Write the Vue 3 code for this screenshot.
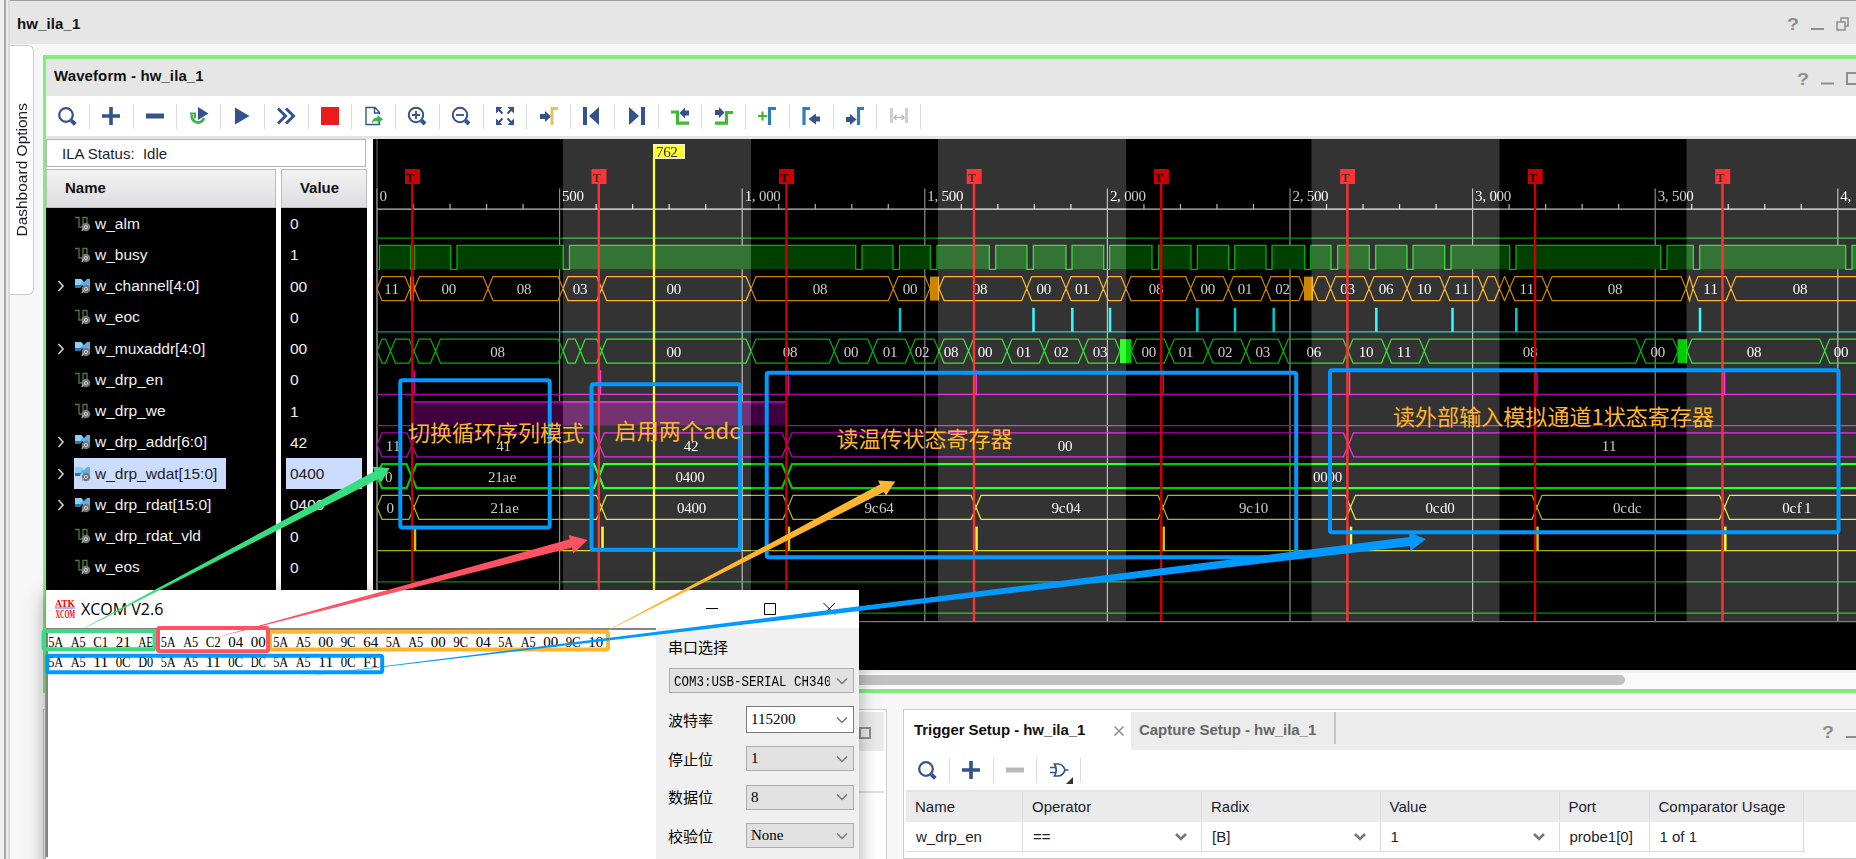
<script setup>
const N = '#34528c'
const icons = {
  search: `<circle cx="11" cy="11" r="6.8" fill="none" stroke="${N}" stroke-width="2.2"/><path d="M16.3 16.3l4 4" stroke="${N}" stroke-width="4"/>`,
  plus: `<path d="M12 3v18M3 12h18" stroke="${N}" stroke-width="3.6"/>`,
  minus: `<path d="M3 12h18" stroke="${N}" stroke-width="5"/>`,
  minusOff: `<path d="M3 12h18" stroke="#b9b9b9" stroke-width="5"/>`,
  restart: `<path d="M5 10.5a6.2 6.2 0 1 0 12 3.5" fill="none" stroke="#3db54a" stroke-width="2.8"/><path d="M3 9.500h5v5" fill="none" stroke="#3db54a" stroke-width="2"/><path d="M11 3l10.500 6.500L11 16z" fill="${N}"/>`,
  play: `<path d="M5 3.500l14.500 8.500L5 20.500z" fill="${N}"/>`,
  run: `<path d="M4 4.500l7.500 7.500L4 19.500M12 4.500l7.500 7.500-7.500 7.500" fill="none" stroke="${N}" stroke-width="3"/>`,
  stop: `<path d="M3 3h18v18H3z" fill="#ed1c1c"/>`,
  export: `<path d="M17.500 17v3.500H4V3.500h9l4.500 5v2M12.500 3.500v5.500h5" fill="none" stroke="${N}" stroke-width="1.400"/><path d="M10 19.500c0-4 2-6 5.500-6v-2.500l5.500 4.300-5.500 4.300v-2.600c-2.500 0-4.500.5-5.500 2.500z" fill="#3db54a"/>`,
  zoomIn: `<circle cx="11" cy="11" r="7.200" fill="none" stroke="${N}" stroke-width="2"/><path d="M11 7v8M7 11h8" stroke="${N}" stroke-width="1.800"/><path d="M16.500 16.500l3.500 3.500" stroke="${N}" stroke-width="4"/>`,
  zoomOut: `<circle cx="11" cy="11" r="7.200" fill="none" stroke="${N}" stroke-width="2"/><path d="M7 11h8" stroke="${N}" stroke-width="1.800"/><path d="M16.500 16.500l3.500 3.500" stroke="${N}" stroke-width="4"/>`,
  fit: `<path d="M3 3h6.500L3 9.500zM21 3v6.500L14.500 3zM3 21v-6.500L9.500 21zM21 21h-6.500l6.500-6.500z" fill="${N}"/><path d="M5 5l4.500 4.500M19 5l-4.500 4.500M5 19l4.500-4.500M19 19l-4.500-4.500" stroke="${N}" stroke-width="2"/>`,
  toCursor: `<path d="M3 10h5V7l6 5.500-6 5.500v-3H3z" fill="${N}"/><path d="M15 21V4.500h6" fill="none" stroke="#e0c463" stroke-width="3"/>`,
  first: `<path d="M3 3h4v18H3zM19 3v18l-10-9z" fill="${N}"/>`,
  last: `<path d="M17 3h4v18h-4zM5 3v18l10-9z" fill="${N}"/>`,
  prevEdge: `<path d="M3 8h6.500v11.200H21" fill="none" stroke="#3fb934" stroke-width="3.200"/><path d="M21 6.500h-4v-3L11.500 9l5.500 5.500v-3h4z" fill="${N}"/>`,
  nextEdge: `<path d="M3 19.200h11.500V8.500H21" fill="none" stroke="#3fb934" stroke-width="3.200"/><path d="M3 6h4V3l5.500 5.500L7 14v-3H3z" fill="${N}"/>`,
  addMark: `<path d="M3 12h9M7.500 7.500v9" stroke="#3fb934" stroke-width="2.200"/><path d="M14.500 21V4.500H21" fill="none" stroke="#2f7fb5" stroke-width="3.200"/>`,
  prevMark: `<path d="M5 21V4.500h6" fill="none" stroke="#2f7fb5" stroke-width="3.200"/><path d="M21 12.500h-4v-3L9.500 15l7.500 5.500v-3h4z" fill="${N}"/>`,
  nextMark: `<path d="M15.500 21V4.500H21" fill="none" stroke="#2f7fb5" stroke-width="3.200"/><path d="M3 13h4v-3l6.500 5.500L7 21v-3H3z" fill="${N}"/>`,
  swap: `<path d="M4.500 4v15M19.500 4v15" stroke="#cfcfcf" stroke-width="3.200"/><path d="M7 13.500h10M9.500 11l-2.500 2.500 2.500 2.500M14.500 11l2.500 2.500-2.500 2.500" fill="none" stroke="#b9b9b9" stroke-width="1.300"/>`,
  gate: `<path d="M7.500 6h3.500c4 0 6 3 7 6-1 3-3 6-7 6H7.500c2-3.500 2-8.500 0-12zM3 9.500h5.500M3 14.500h5.500M18 12h3.500" fill="none" stroke="${N}" stroke-width="1.700"/><path d="M26 19v7h-7z" fill="#333"/>`,
}
const tools = ['search', 'plus', 'minus', 'restart', 'play', 'run', 'stop', 'export', 'zoomIn', 'zoomOut', 'fit', 'toCursor', 'first', 'last', 'prevEdge', 'nextEdge', 'addMark', 'prevMark', 'nextMark', 'swap']
const trigTools = ['search', 'plus', 'minusOff', 'gate']

const signals = [
  ['w_alm', '0', 0], ['w_busy', '1', 0], ['w_channel[4:0]', '00', 1], ['w_eoc', '0', 0],
  ['w_muxaddr[4:0]', '00', 1], ['w_drp_en', '0', 0], ['w_drp_we', '1', 0], ['w_drp_addr[6:0]', '42', 1],
  ['w_drp_wdat[15:0]', '0400', 1, true], ['w_drp_rdat[15:0]', '0400', 1], ['w_drp_rdat_vld', '0', 0], ['w_eos', '0', 0],
]

const END = 1870
const low = (i) => 238.1 + 31.25 * i
const high = (i) => low(i) - 24

/* x of each [fall, rise] dip of the busy signal */
const dips = [[410.7, 414.3], [450.7, 457], [563, 569.5], [855.7, 862], [893, 899.5], [930.3, 937], [989.3, 995.7], [1027, 1033.3], [1066, 1072], [1103.7, 1109.7], [1152, 1158.7], [1191, 1197.3], [1228.7, 1234.7], [1266, 1272], [1304.7, 1310.7], [1331, 1337.7], [1369.3, 1375.7], [1407, 1413], [1444.7, 1451], [1509.7, 1516], [1660.7, 1667], [1693.3, 1699.7], [1845.7, 1852]]
const busyD = (() => {
  const h = high(1), l = low(1)
  let d = `M377 ${l}H379.500V${h}`
  dips.forEach(([f, r]) => { d += `H${f}V${l}H${r}V${h}` })
  return d + `H${END}`
})()
const busyFill = busyD + `V${low(1)}H379.5Z`

const hex = (i, xs) => {
  const h = high(i), l = low(i), m = (h + l) / 2
  let d = ''
  for (let k = 0; k < xs.length - 1; k++) {
    const a = xs[k], b = xs[k + 1]
    const s = Math.min(5, (b - a) / 2)
    d += `M${a} ${m}L${a + s} ${h}H${b - s}L${b} ${m}L${b - s} ${l}H${a + s}Z`
  }
  return d
}
/* fixed-pitch glyph positions: every character gets its own x */
const cells = (t, x, pitch = 7.15) => [...t].map((c, k) => (x + k * pitch).toFixed(2)).join(' ')

const buses = [
  { i: 2, c: '#c98300', w: 1.2, groups: [[377, 410, 414.5, 488, 563, 601.7, 751, 893.3, 930], [939, 1026.7, 1066, 1103.3, 1126, 1190.7, 1228.3, 1266, 1304], [1313, 1330.5, 1369, 1407, 1444.7, 1483, 1499.5, 1509.7, 1547, 1686, 1693, 1731, END]],
    t: [['11', 391.5], ['00', 448.8], ['08', 524], ['03', 580], ['00', 673.7], ['08', 820], ['00', 910], ['08', 980], ['00', 1043.7], ['01', 1082.3], ['08', 1156], ['00', 1207.7], ['01', 1245], ['02', 1282.5], ['03', 1347.5], ['06', 1386], ['10', 1424], ['11', 1461.5], ['11', 1526.7], ['08', 1615], ['11', 1710.5], ['08', 1800]] },
  { i: 4, c: '#00b400', w: 1.2, groups: [[377, 390.5, 414, 435.5, 563, 580.3, 601.7, 751, 834.3, 872.7, 910.3, 939, 968.5, 1007, 1044.3, 1083.3, 1120], [1131.5, 1169.3, 1208, 1245.7, 1283.3, 1348, 1386.5, 1424.3, 1640.7, 1678], [1687, 1824.7, END]],
    t: [['08', 497.5], ['00', 673.7], ['08', 790], ['00', 851], ['01', 890], ['02', 922], ['08', 951], ['00', 985], ['01', 1023.7], ['02', 1061.3], ['03', 1100], ['00', 1148.7], ['01', 1186], ['02', 1225], ['03', 1262.7], ['06', 1313.7], ['10', 1366], ['11', 1404], ['08', 1530], ['00', 1657.7], ['08', 1754], ['00', 1841]] },
  { i: 7, c: '#b400b4', w: 1.3, groups: [[377, 412, 599.3, 787, 1348.5, END]], t: [['11', 393], ['41', 503.5], ['42', 691], ['00', 1065], ['11', 1609]] },
  { i: 8, c: '#00cc00', w: 2.2, groups: [[377, 411.5, 599, 787, END]], t: [['0', 388.7], ['21ae', 502.5], ['0400', 690], ['0000', 1327.5]] },
  { i: 9, c: '#b8b800', w: 1.2, groups: [[377, 414, 601.5, 788, 976, 1163, 1350.5, 1537, 1724.5, END]], t: [['0', 390], ['21ae', 505], ['0400', 691.5], ['9c64', 879], ['9c04', 1066], ['9c10', 1253.5], ['0cd0', 1440], ['0cdc', 1627.5], ['0cf1', 1796.7]] },
]
const blocks = [[930, 939, 2, '#cc8500'], [1304, 1313, 2, '#cc8500'], [1120, 1131.5, 4, '#00cc00'], [1677.5, 1687, 4, '#00cc00'], [410, 414, 2, '#cc8500']]
const eoc = [900, 1033.5, 1072.3, 1110, 1197.3, 1235, 1273.7, 1376.3, 1452.5, 1516.3, 1700]
const triggers = [412.3, 598.8, 786.4, 974, 1161.2, 1347.4, 1535, 1722.5]
const enPulses = [414.4, 600.6, 788.4, 976.2, 1163.2, 1349.6, 1537, 1724.6]
const vldPulses = [415, 602.5, 789, 976.5, 1163.7, 1351, 1537.5, 1725.3]
const bands = [[563, 751], [938, 1126], [1311.5, 1499.5], [1686.5, 1870]]
const majors = ['0', '500', '1,000', '1,500', '2,000', '2,500', '3,000', '3,500', '4,'].map((t, k) => ({ t, x: 377 + 182.6 * k }))
const minors = []
for (let k = 0; k < 41; k++) if (k % 5) minors.push(377 + 36.52 * k)

const bytes1 = '5A A5 C1 21 AE 5A A5 C2 04 00 5A A5 00 9C 64 5A A5 00 9C 04 5A A5 00 9C 10'.split(' ')
const bytes2 = '5A A5 11 0C D0 5A A5 11 0C DC 5A A5 11 0C F1'.split(' ')
const fields = [['波特率', '115200', true], ['停止位', '1'], ['数据位', '8'], ['校验位', 'None']]
</script>

<template>
  <div class="screen">
    <div class="edge"></div>
    <div class="main">
      <header class="top-head">
        <span class="bold">hw_ila_1</span>
        <svg class="winctl" width="72" height="24" viewBox="0 0 72 24">
          <text x="3" y="19" class="q" textLength="12" lengthAdjust="spacingAndGlyphs">?</text>
          <path d="M27 18h13" stroke="#8e8e8e" stroke-width="2" />
          <path d="M53 11h8v8h-8zM57 11V7h7v8h-3" fill="none" stroke="#8e8e8e" stroke-width="1.500" />
        </svg>
      </header>
      <div class="work">
        <aside class="side"><span>Dashboard Options</span></aside>
        <div class="docks">
          <section class="wave-panel">
            <header class="wave-head">
              <span class="bold">Waveform - hw_ila_1</span>
              <svg class="winctl mid" width="62" height="24" viewBox="0 0 62 24">
                <text x="3" y="17.500" class="q" textLength="12" lengthAdjust="spacingAndGlyphs">?</text>
                <path d="M27 16.500h13" stroke="#8e8e8e" stroke-width="2" />
                <path d="M53 6h12v11h-12z" fill="none" stroke="#8e8e8e" stroke-width="2" />
              </svg>
            </header>
            <div class="toolbar">
              <div v-for="t in tools" :key="t" class="tool"><svg width="24" height="24" viewBox="0 0 24 24" v-html="icons[t]"></svg></div>
            </div>
            <div class="wave-body">
              <div class="left">
                <div class="status">ILA Status:&nbsp; Idle</div>
                <div class="cols">
                  <div class="names">
                    <div class="colhead">Name</div>
                    <div v-for="s in signals" :key="s[0]" class="sig">
                      <svg class="exp" width="10" height="14" viewBox="0 0 10 14"><path v-if="s[2]" d="M2.500 2l4.500 5-4.500 5" fill="none" stroke="#c8c8c8" stroke-width="1.700" /></svg>
                      <span class="siglabel" :class="{ sel: s[3] }">
                        <svg width="16" height="16" viewBox="0 0 16 16">
                          <template v-if="s[2]">
                            <path d="M0 1h6l3 3 3-3h3v8H9L7 7l-2 3H0z" fill="#5fb0e6" /><path d="M0 1h6l2 2-3 4H0z" fill="#8ed0f5" /><path d="M0 7h6l-1 3H0z" fill="#2874b4" />
                          </template>
                          <path v-else d="M0 1.500h4v9.500h4V1.500h4v6" fill="none" stroke="#4d7a3c" stroke-width="1.300" />
                          <circle cx="11" cy="11" r="4.300" fill="#777" /><circle cx="11" cy="11" r="1.600" fill="none" stroke="#d0d0d0" /><path d="M7 15l1.500-3" stroke="#aaa" stroke-width="1.500" />
                        </svg>
                        <span>{{ s[0] }}</span>
                      </span>
                    </div>
                  </div>
                  <div class="values">
                    <div class="colhead val">Value</div>
                    <div v-for="s in signals" :key="s[0]" class="sigval"><span :class="{ sel: s[3] }">{{ s[1] }}</span></div>
                  </div>
                </div>
              </div>
              <svg class="wave" width="1483" height="531" viewBox="373 139 1483 531">
                <rect x="373" y="139" width="1483" height="531" fill="#000" />
                <path d="M377 139V621.500" stroke="#555" stroke-width="1.300" />
                <path d="M377 209.200H1856" stroke="#c0c0c0" stroke-width="1.300" />
                <g v-for="m in majors" :key="m.t">
                  <path :d="`M${m.x} 188.500V621.500`" stroke="#8c8c8c" stroke-width="1.200" />
                  <text :x="cells(m.t, m.x + 2.5)" y="201.200" class="num">{{ m.t }}</text>
                </g>
                <path v-for="x in minors" :key="x" :d="`M${x} 204V209`" stroke="#b4b4b4" stroke-width="1.200" />
                <path :d="`M377 ${low(0)}H1856`" stroke="#00a000" stroke-width="1.300" />
                <path :d="busyFill" fill="#004000" />
                <path :d="busyD" fill="none" stroke="#00b000" stroke-width="1.300" />
                <path :d="`M377 ${low(3)}H1856`" stroke="#009696" stroke-width="1.300" />
                <path v-for="x in eoc" :key="x" :d="`M${x} ${high(3)}V${low(3)}`" stroke="#00cccc" stroke-width="2.500" />
                <path :d="`M377 ${low(5)}H1856`" stroke="#b000b0" stroke-width="1.200" />
                <path v-for="x in enPulses" :key="x" :d="`M${x} ${high(5)}V${low(5)}`" stroke="#cc00cc" stroke-width="1.400" />
                <path :d="`M412 ${high(6)}H787V${low(6)}H412Z`" fill="#400040" />
                <path :d="`M412 ${high(6) + 0.5}H787`" stroke="#a000a0" stroke-width="2" />
                <path :d="`M377 ${low(6)}H412M787 ${low(6)}H1856`" stroke="#b000b0" stroke-width="1.200" />
                <path :d="`M377 ${low(10)}H1856`" stroke="#a8a800" stroke-width="1.200" />
                <path v-for="x in vldPulses" :key="x" :d="`M${x} ${high(10)}V${low(10)}`" stroke="#cccc00" stroke-width="2.500" />
                <path :d="`M377 ${low(11)}H1856M377 ${low(12)}H1856`" stroke="#009400" stroke-width="1.300" />
                <path d="M377 621.700H1856" stroke="#808080" stroke-width="1.300" />
                <rect v-for="b in blocks" :key="b[0]" :x="b[0]" :y="high(b[2])" :width="b[1] - b[0]" :height="24" :fill="b[3]" />
                <g v-for="b in buses" :key="b.i">
                  <path v-for="(g, k) in b.groups" :key="k" :d="hex(b.i, g)" fill="none" :stroke="b.c" :stroke-width="b.w" />
                  <text v-for="t in b.t" :key="t[1]" :x="cells(t[0], t[1] - t[0].length * 3.6, 7.2)" :y="low(b.i) - 6.2" class="num">{{ t[0] }}</text>
                </g>
                <g v-for="x in triggers" :key="x">
                  <rect :x="x - 7.3" y="169" width="15" height="15" fill="#cc0000" />
                  <path :d="`M${x} 184V621`" stroke="#cc0000" stroke-width="2.400" />
                  <text :x="x - 6" y="182" class="tee">T</text>
                </g>
                <rect v-for="b in bands" :key="b[0]" class="band" :x="b[0]" y="139" :width="b[1] - b[0]" height="482" />
                <path d="M654 158V621" stroke="#ffff33" stroke-width="2.300" />
                <rect x="653.500" y="144.500" width="31" height="14" fill="#ffff33" stroke="#f4f4d0" />
                <text :x="cells('762', 656)" y="157" class="num dark">762</text>
              </svg>
            </div>
            <div class="hscroll"><div class="thumb"></div></div>
          </section>
          <div class="bottom">
            <section class="dock-left">
              <div class="dock-head"><svg width="14" height="14" viewBox="0 0 14 14"><path d="M2 2h10v10H2z" fill="none" stroke="#8e8e8e" stroke-width="2" /></svg></div>
              <div class="dock-tools"></div>
            </section>
            <section class="trig">
              <div class="tabs">
                <div class="tab on"><span class="bold">Trigger Setup - hw_ila_1</span>
                  <svg width="12" height="12" viewBox="0 0 12 12"><path d="M1.500 2.500l9 9M10.500 2.500l-9 9" stroke="#8e8e8e" stroke-width="1.500" /></svg>
                </div>
                <div class="tab off"><span class="bold">Capture Setup - hw_ila_1</span></div>
                <svg class="winctl low" width="37" height="24" viewBox="0 0 37 24">
                  <text x="3" y="19" class="q" textLength="12" lengthAdjust="spacingAndGlyphs">?</text>
                  <path d="M27 18h13" stroke="#8e8e8e" stroke-width="2" />
                </svg>
              </div>
              <div class="toolbar small">
                <div v-for="t in trigTools" :key="t" class="tool"><svg width="24" height="24" viewBox="0 0 24 24" v-html="icons[t]"></svg></div>
              </div>
              <div class="grid head"><span>Name</span><span>Operator</span><span>Radix</span><span>Value</span><span>Port</span><span>Comparator Usage</span></div>
              <div class="grid row">
                <span>w_drp_en</span>
                <span v-for="v in ['==', '[B]', '1']" :key="v">{{ v }}<svg width="14" height="10" viewBox="0 0 14 10"><path d="M2 2l5 5 5-5" fill="none" stroke="#777" stroke-width="2.600" /></svg></span>
                <span>probe1[0]</span><span>1 of 1</span>
              </div>
            </section>
          </div>
        </div>
      </div>
    </div>

    <section class="xcom">
      <header class="x-head">
        <svg class="x-logo" width="20" height="19" viewBox="0 0 20 19">
          <text x="0" y="6.500" class="logo" textLength="20" lengthAdjust="spacingAndGlyphs">ATK</text>
          <path d="M0 8h20" stroke="#4b6bff" stroke-width="1" />
          <text x="0.500" y="18" class="logo big" textLength="19.500" lengthAdjust="spacingAndGlyphs">XCOM</text>
        </svg>
        <span class="x-title">XCOM V2.6</span>
        <svg class="x-ctl" width="132" height="14" viewBox="0 0 132 14">
          <path d="M1 6.500h12" stroke="#000" /><path d="M59.500 1.500h11v11h-11z" fill="none" stroke="#000" /><path d="M118.500 1l11.500 11.500M130 1l-11.500 11.500" stroke="#000" />
        </svg>
      </header>
      <div class="x-body">
        <svg class="x-text" width="610" height="229" viewBox="48 630 608 227">
          <text v-for="(b, k) in bytes1" :key="k" :x="48.200 + k * 22.5" y="646.800" class="hexa" textLength="15" lengthAdjust="spacingAndGlyphs">{{ b }}</text>
          <text v-for="(b, k) in bytes2" :key="k" :x="48.200 + k * 22.5" y="667" class="hexa" textLength="15" lengthAdjust="spacingAndGlyphs">{{ b }}</text>
        </svg>
        <div class="x-side">
          <div class="x-label first">串口选择</div>
          <div class="combo wide"><span class="port"><b>COM3:USB-SERIAL CH340</b></span><svg width="14" height="10" viewBox="0 0 14 10"><path d="M2 2.500l5 5 5-5" fill="none" stroke="#777" stroke-width="1.500" /></svg></div>
          <div v-for="f in fields" :key="f[0]" class="x-row">
            <span class="x-label">{{ f[0] }}</span>
            <div class="combo" :class="{ edit: f[2] }"><span>{{ f[1] }}</span><svg width="14" height="10" viewBox="0 0 14 10"><path d="M2 2.500l5 5 5-5" fill="none" stroke="#777" stroke-width="1.500" /></svg></div>
          </div>
        </div>
      </div>
    </section>

    <svg class="notes" width="1856" height="859" viewBox="0 0 1856 859">
      <g fill="none" stroke-width="4">
        <g stroke="#0099ff">
          <rect x="400.300" y="380.300" width="149.400" height="147.200" rx="2" />
          <rect x="591.500" y="384.300" width="148.500" height="165.500" rx="2" />
          <rect x="766.700" y="372.800" width="529.500" height="184.500" rx="2" />
          <rect x="1330" y="370.300" width="508.500" height="162" rx="2" />
        </g>
        <rect x="270" y="631.700" width="338" height="17.800" rx="2" stroke="#ffb52e" />
        <rect x="43.500" y="631" width="111" height="18.300" rx="2" stroke="#37dd7e" />
        <rect x="158" y="628" width="110" height="23.300" rx="2" stroke="#ff5264" />
        <rect x="47.200" y="655.700" width="335" height="16.500" rx="2" stroke="#0099ff" />
      </g>
      <path d="M73 634L374.500 471.300 372.700 466.700 389.700 468 381 482.500 378.500 479Z" fill="#37dd7e" />
      <path d="M214 638L569.800 539.300 568.700 535 587.500 540 573.300 553.500 572 547.500Z" fill="#ff5264" />
      <path d="M596 636.500L880 484.500 878 480.500 895.300 481.500 886 495.500 883.800 492Z" fill="#ffb52e" />
      <path d="M286 678.500L1409.500 537 1409.200 532.500 1426 539 1410.400 551 1410 546Z" fill="#0099ff" />
      <g class="cjk">
        <text x="408" y="440.500" textLength="176">切换循环序列模式</text>
        <text x="614.500" y="439" textLength="126">启用两个adc</text>
        <text x="836.500" y="447" textLength="176">读温传状态寄存器</text>
        <text x="1393" y="424.500" textLength="321">读外部输入模拟通道1状态寄存器</text>
      </g>
    </svg>
  </div>
</template>

<style>
body { overflow: hidden; }
</style>
<style scoped>
.screen, .screen * { box-sizing: border-box; }
.screen { position: relative; width: 1856px; height: 859px; overflow: hidden; display: flex; background: #f6f6f6; font: 15px "Liberation Sans", Arial, sans-serif; color: #1c1c2c; }
.screen svg { display: block; flex: none; }
.edge { width: 10px; background: linear-gradient(90deg, #f0f0f0 0 4px, #a8a8a8 4px 6px, #ececec 6px 8px, #dadada 8px); }
.main { flex: 1; min-width: 0; display: flex; flex-direction: column; }
.bold { font-weight: bold; font-size: 15px; letter-spacing: 0.1px; color: #111; }
.top-head { height: 44px; padding: 1px 0 0 7px; border-top: 1px solid #a0a0a0; background: #e6e6e6; display: flex; align-items: center; justify-content: space-between; }
.q { font: bold 17px "Liberation Sans", Arial, sans-serif; fill: #8e8e8e; }
.work { flex: 1; display: flex; background: #f7f7f7; min-height: 0; }
.side { width: 24px; height: 250px; margin: 1px 9px 0 0; background: #fff; border: 1.5px solid #ccc; border-left: 0; border-radius: 0 6px 6px 0; display: flex; align-items: center; justify-content: center; }
.side span { writing-mode: vertical-rl; transform: rotate(180deg); font-size: 15.5px; white-space: nowrap; }
.docks { flex: 1; min-width: 0; display: flex; flex-direction: column; }
.wave-panel { height: 638px; margin-top: 11px; border: 4px solid #84ec7c; border-left-width: 3px; border-right: 0; background: #fff; }
.wave-head { height: 37px; padding-left: 8px; background: #e6e6e6; display: flex; align-items: center; justify-content: space-between; padding-bottom: 4px; }
.winctl.mid { margin-top: 6px; }
.toolbar { height: 40px; display: flex; align-items: center; background: #fff; }
.tool { width: 43.75px; height: 25px; border-right: 1px solid #dcdcdc; display: flex; align-items: center; justify-content: center; }
.tool svg { overflow: visible; }
.wave-body { display: flex; border-top: 3px solid #e4e4e4; height: 534px; }
.left { width: 327px; display: flex; flex-direction: column; }
.status { width: 320px; height: 28px; border: 1px solid #b4b4b4; padding: 0 0 0 15px; line-height: 27px; font-size: 15px; }
.cols { flex: 1; display: flex; gap: 5px; padding-top: 2px; }
.names, .values { background: #000; }
.names { width: 230px; }
.values { width: 86px; }
.colhead { height: 39px; margin-bottom: 1px; border: 1px solid #bbb; background: linear-gradient(#f2f2f2, #dedee0); font-weight: bold; color: #111; line-height: 36px; padding-left: 18px; }
.colhead.val { padding: 0; text-align: center; padding-right: 9px; padding-left: 0; }
.sig { height: 31.25px; display: flex; align-items: center; padding: 0 0 2px 10px; color: #f0f0f0; font-size: 15.5px; }
.exp { margin-right: 8px; }
.siglabel { display: flex; align-items: center; height: 31px; gap: 4px; padding-left: 1px; padding-right: 9px; white-space: nowrap; }
.siglabel.sel, .sigval .sel { background: #ccdcff; color: #222; }
.sigval { height: 31.25px; display: flex; align-items: center; color: #f0f0f0; padding: 0 0 2px 5px; font-size: 15.5px; }
.sigval span { width: 76px; height: 31px; line-height: 31px; padding-left: 4px; }
.wave { isolation: isolate; }
.num { font: 15px "Liberation Serif", "Times New Roman", serif; fill: #ccc; }
.num.dark { fill: #333; }
.tee { font: bold 12px "Liberation Serif", serif; fill: #000; }
.band { fill: #333; mix-blend-mode: plus-lighter; }
.hscroll { height: 18px; background: #fafafa; border-top: 3px solid #f0f0f0; padding-top: 2px; }
.thumb { width: 1579px; height: 10px; border-radius: 5px; background: #c1c1c1; }
.bottom { display: flex; gap: 16px; padding-top: 16px; flex: 1; min-height: 0; }
.dock-left { width: 844px; border: 1.5px solid #ccc; border-bottom: 0; background: #fff; padding: 2px 2px 0; }
.dock-head { height: 39px; background: #ebebeb; display: flex; justify-content: flex-end; padding: 14px 12px 0 0; }
.dock-tools { height: 42px; border-bottom: 2px solid #e2e2e2; }
.trig { flex: 1; min-width: 0; border: 1.5px solid #ccc; border-right: 0; background: #fff; padding: 2px 0 0 2px; }
.tabs { height: 38px; display: flex; align-items: center; background: #ececec; }
.tabs .bold { letter-spacing: -0.05px; }
.tab { display: flex; align-items: center; height: 100%; padding-left: 8px; white-space: nowrap; padding-bottom: 3px; }
.tab.on { width: 225px; background: #fff; justify-content: space-between; padding-right: 6px; }
.tab.off { width: 205px; height: 32px; border-right: 2px solid #c4c4c4; margin-bottom: 6px; padding-top: 3px; padding-bottom: 0; }
.tab.off .bold { color: #666; }
.winctl.low { margin-left: auto; }
.toolbar.small { height: 40px; }
.grid { display: grid; grid-template-columns: 117px 179px 178.5px 179px 90px 154.500px 1fr; }
.grid span { border-right: 1px solid #dcdcdc; padding-left: 9px; display: flex; align-items: center; justify-content: space-between; white-space: nowrap; font-size: 15px; padding-right: 13px; }
.grid.head { height: 32px; background: #ebebeb; border-top: 2px solid #e4e4e4; padding-bottom: 1px; }
.grid.head span { padding-bottom: 1px; }
.grid.row { height: 30px; width: 898.5px; border-bottom: 1px solid #dcdcdc; grid-template-columns: 117px 179px 178.5px 179px 90px 154.500px; }
.grid.row span { padding-left: 10px; }
.xcom { position: absolute; left: 45px; top: 590px; width: 814px; height: 300px; background: #fff; box-shadow: 0 4px 18px rgba(0, 0, 0, 0.35); border-left: 1px solid #9a9a9a; }
.x-head { height: 38px; display: flex; align-items: center; padding-left: 9px; }
.x-logo { overflow: visible; }
.x-title { font: 16px "Open Sans", "Noto Sans", sans-serif; color: #000; margin-left: 6px; width: 624px; white-space: nowrap; }
.logo { font: bold 10px "Liberation Serif", serif; fill: #f00; }
.logo.big { font-size: 12.5px; }
.x-body { display: flex; }
.x-text { border-top: 2px solid #828282; border-left: 2px solid #828282; }
.hexa { font: 15.5px "Liberation Serif", serif; fill: #000; }
.x-side { width: 204px; height: 240px; background: #f0f0f0; padding: 8px 5px 0 12px; }
.x-label { font: 15px "Noto Sans CJK SC", sans-serif; color: #000; line-height: 22px; white-space: nowrap; }
.x-label.first { margin-bottom: 10px; }
.combo { width: 108px; height: 25px; background: #e1e1e1; border: 1px solid #adadad; display: flex; align-items: center; justify-content: space-between; padding: 0 4px; font: 15px "Liberation Serif", serif; color: #000; }
.combo.wide { width: 185px; margin-left: 1px; }
.port { width: 156px; overflow: hidden; white-space: nowrap; }
.port b { display: inline-block; font: 12.5px "Liberation Mono", monospace; transform: scaleY(1.2); }
.combo.edit { height: 27px; background: #fff; border-color: #7a7a7a; }
.x-row { height: 38.7px; display: flex; align-items: center; justify-content: space-between; width: 186px; }
.x-row:nth-child(3) { margin-top: 7.500px; }
.notes { position: absolute; left: 0; top: 0; }
.cjk { font: 22px "Noto Sans CJK SC", sans-serif; fill: #ffb52e; }
</style>
